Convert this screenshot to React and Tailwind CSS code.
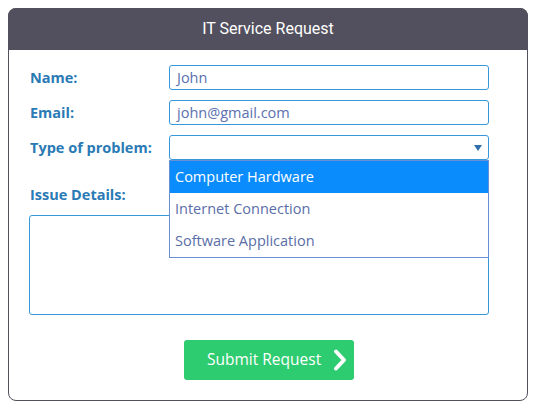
import React from 'react'

const options = ['Computer Hardware', 'Internet Connection', 'Software Application']

export default function App() {
    return (
        <div className="p-2 bg-white" style={{ fontFamily: '"Open Sans", sans-serif' }}>
            <div className="relative w-[520px] border border-[#52505e] rounded-lg bg-white">
                <div className="h-[42px] -mt-px -mx-px bg-[#52505e] rounded-t-lg flex items-center justify-center">
                    <h1 className="text-white text-[16px] font-['Roboto',sans-serif]">IT Service Request</h1>
                </div>
                <form className="pl-5 pr-[38px] pt-[15px] pb-5">
                    <div className="flex flex-col gap-[10px]">
                        <div className="flex items-center h-[25px]">
                            <label className="w-[140px] pl-px text-[14.5px] font-bold text-[#2a7ab5]">Name:</label>
                            <div className="w-[320px] h-[25px] border border-[#3498db] rounded-[3px] px-[7px] flex items-center text-[14.5px] text-[#5a70b0]">John</div>
                        </div>
                        <div className="flex items-center h-[25px]">
                            <label className="w-[140px] pl-px text-[14.5px] font-bold text-[#2a7ab5]">Email:</label>
                            <div className="w-[320px] h-[25px] border border-[#3498db] rounded-[3px] px-[7px] flex items-center text-[14.5px] text-[#5a70b0]">john@gmail.com</div>
                        </div>
                        <div className="flex items-center h-[25px]">
                            <label className="w-[140px] pl-px text-[14.5px] font-bold text-[#2a7ab5]">Type of problem:</label>
                            <div className="relative w-[320px] h-[25px] border border-[#3498db] rounded-[3px] flex items-center justify-end pr-[6px]">
                                <svg width="8" height="6" viewBox="0 0 8 6">
                                    <path d="M0 0 H8 L4 6 Z" fill="#2f6ea8" />
                                </svg>
                                <div className="absolute left-[-1px] top-[24px] w-[320px] border border-[#6b8fd4] bg-white z-10">
                                    {options.map((o, i) => (
                                        <div
                                            key={o}
                                            className={
                                                i === 0
                                                    ? 'h-[32px] flex items-center px-[5px] text-[14.5px] bg-[#0a8cfd] text-white'
                                                    : 'h-[32px] flex items-center px-[5px] text-[14.5px] text-[#5a6ea8]'
                                            }
                                        >
                                            {o}
                                        </div>
                                    ))}
                                </div>
                            </div>
                        </div>
                    </div>
                    <div className="mt-[25px] h-[20px] flex items-center pl-px text-[14.5px] font-bold text-[#2a7ab5]">Issue Details:</div>
                    <div className="mt-[10px] w-[460px] h-[100px] border border-[#3498db] rounded-[3px]"></div>
                    <div className="mt-[25px] flex justify-center pl-5">
                        <button type="button" className="w-[170px] h-[40px] bg-[#2ecc71] rounded-[3px] flex items-center pl-[23px] gap-[11px] text-white text-[15.5px]">
                            <span>Submit Request</span>
                            <svg width="16" height="24" viewBox="0 0 16 24">
                                <path d="M4 3.5 L12 12 L4 20.5" fill="none" stroke="white" strokeWidth="4" strokeLinecap="round" strokeLinejoin="round" />
                            </svg>
                        </button>
                    </div>
                </form>
            </div>
        </div>
    )
}
